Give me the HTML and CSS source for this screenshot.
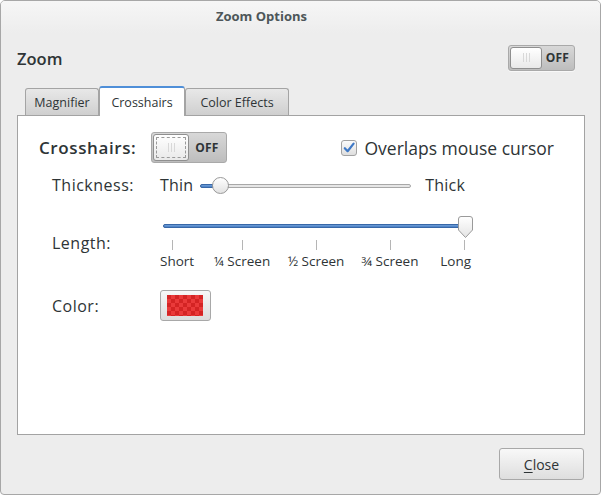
FILE: index.html
```html
<!DOCTYPE html>
<html>
<head>
<meta charset="utf-8">
<link rel="stylesheet" href="styles.css">
</head>
<body>
<div class="window">
  <div class="titlebar">Zoom Options</div>
  <div class="content">
    <div class="zoom-row">
      <span class="zoom-label">Zoom</span>
      <div class="switch big">
        <div class="thumb"><span class="grip"></span></div>
        <span class="off">OFF</span>
      </div>
    </div>
    <div class="tabs">
      <div class="tab">Magnifier</div>
      <div class="tab active">Crosshairs</div>
      <div class="tab">Color Effects</div>
    </div>
    <div class="panel">
      <div class="cross-row">
        <span class="cross-label">Crosshairs:</span>
        <div class="switch focus">
          <div class="thumb"><span class="grip"></span></div>
          <span class="off">OFF</span>
        </div>
        <label class="check">
          <span class="box">
            <svg width="14" height="14" viewBox="0 0 14 14"><path d="M2.8 7.2 L5.6 10.2 L11.6 2.6" fill="none" stroke="#3f79c6" stroke-width="2.2" stroke-linecap="round" stroke-linejoin="round"/></svg>
          </span>
          Overlaps mouse cursor
        </label>
      </div>
      <div class="grid">
        <span class="lbl thick-lbl">Thickness:</span>
        <div class="thick-row">
          <span class="end">Thin</span>
          <div class="slider small">
            <div class="track"><div class="fill"></div></div>
            <div class="knob"></div>
          </div>
          <span class="end">Thick</span>
        </div>
        <span class="lbl len-lbl">Length:</span>
        <div class="len">
          <div class="slider long">
            <div class="track"><div class="fill"></div></div>
            <svg class="pointer" width="17" height="23" viewBox="0 0 17 23"><defs><linearGradient id="pg" x1="0" y1="0" x2="0" y2="1"><stop offset="0" stop-color="#ffffff"/><stop offset="1" stop-color="#e4e4e4"/></linearGradient></defs><path d="M1.5 3 Q1.5 0.5 4 0.5 L13 0.5 Q15.5 0.5 15.5 3 L15.5 14 L8.5 21.5 L1.5 14 Z" fill="url(#pg)" stroke="#9a9a9a" stroke-width="1"/></svg>
          </div>
          <div class="ticks">
            <span class="tick t1"></span>
            <span class="tick t2"></span>
            <span class="tick t3"></span>
            <span class="tick t4"></span>
            <span class="tick t5"></span>
          </div>
          <div class="marks">
            <span class="mt l1">Short</span>
            <span class="mt l2">¼ Screen</span>
            <span class="mt l3">½ Screen</span>
            <span class="mt l4">¾ Screen</span>
            <span class="mt l5">Long</span>
          </div>
        </div>
        <span class="lbl color-lbl">Color:</span>
        <div class="colorcell">
          <div class="colorbtn"><div class="swatch"></div></div>
        </div>
      </div>
    </div>
    <div class="footer">
      <button class="close"><u>C</u>lose</button>
    </div>
  </div>
</div>
</body>
</html>
```
FILE: styles.css
```css
* { box-sizing: border-box; }
html, body { margin: 0; padding: 0; }
body {
  width: 601px;
  height: 495px;
  font-family: "Open Sans", "DejaVu Sans", sans-serif;
  color: #2e3436;
  background: #ffffff;
}
.window {
  width: 601px;
  height: 495px;
  border: 1px solid #a7a7a7;
  border-radius: 5px 5px 4px 4px;
  background: #ededed;
  overflow: hidden;
}
.titlebar {
  height: 32px;
  line-height: 31px;
  text-align: center;
  padding-right: 78px;
  font-size: 13px;
  font-weight: bold;
  color: #4d5659;
  background: linear-gradient(#f6f6f6, #ededed);
}
.content {
  padding: 0 16px 0 16px;
}
.zoom-row {
  height: 51px;
  display: flex;
  align-items: center;
  justify-content: space-between;
  padding-right: 9px;
}
.zoom-label {
  font-size: 16.5px;
  font-weight: 600;
  color: #2e3436;
  margin-top: -1px;
}
.switch {
  width: 67px;
  height: 26px;
  border: 1px solid #a9a9a9;
  border-radius: 3px;
  background: linear-gradient(#d8d8d8, #bdbdbd);
  display: flex;
  align-items: center;
  padding: 1px;
  box-shadow: 0 1px 0 rgba(255,255,255,0.6);
}
.switch.big { margin-top: -2px; }
.switch .thumb {
  width: 32px;
  height: 22px;
  border: 1px solid #8f8f8f;
  border-radius: 3px;
  background: linear-gradient(#ffffff, #e9e9e9);
  display: flex;
  align-items: center;
  justify-content: center;
}
.switch .grip {
  width: 7px;
  height: 9px;
  border-left: 1px solid #d8d8d8;
  border-right: 1px solid #d8d8d8;
  position: relative;
}
.switch .grip::after {
  content: "";
  position: absolute;
  left: 2px;
  top: 0;
  width: 1px;
  height: 9px;
  background: #d8d8d8;
}
.switch .off {
  flex: 1;
  text-align: center;
  font-size: 12px;
  font-weight: bold;
  color: #2e3436;
  letter-spacing: 0.2px;
}
.switch.focus {
  width: 76px;
  height: 31px;
  margin-top: -1px;
}
.switch.focus .thumb {
  width: 36px;
  height: 27px;
  position: relative;
}
.switch.focus .thumb::before {
  content: "";
  position: absolute;
  left: 2px; top: 2px; right: 2px; bottom: 2px;
  border: 1px dashed #9a9a9a;
  border-radius: 1px;
}
.tabs {
  display: flex;
  align-items: flex-end;
  height: 30px;
  padding-left: 8px;
  margin-top: 1px;
}
.tab {
  height: 27px;
  padding: 0 4px;
  font-size: 12.5px;
  line-height: 27px;
  color: #2e3436;
  border: 1px solid #a4a4a4;
  border-bottom: none;
  border-radius: 3px 3px 0 0;
  background: linear-gradient(#e8e8e8, #cfcfcf);
  text-align: center;
}
.tab:first-child { width: 74px; }
.tab.active {
  height: 30px;
  width: 86px;
  line-height: 30px;
  background: #ffffff;
  border-top: 2px solid #4f8fd8;
  margin-bottom: -1px;
  position: relative;
  z-index: 1;
}
.tab:last-child { width: 104px; }
.panel {
  height: 320px;
  width: 568px;
  border: 1px solid #a3a3a3;
  background: #ffffff;
  padding: 16px 30px 0 21px;
}
.cross-row {
  display: flex;
  align-items: center;
  height: 31px;
}
.cross-label {
  font-size: 17px;
  font-weight: 600;
  letter-spacing: 0.6px;
  width: 112px;
  color: #2e3436;
}
.check {
  margin-left: auto;
  display: flex;
  align-items: center;
  font-size: 17.5px;
  color: #2e3436;
}
.check .box {
  width: 16px;
  height: 16px;
  border: 1px solid #a2a2a2;
  border-radius: 3px;
  background: linear-gradient(#fbfbfb, #dedede);
  margin-right: 7px;
  display: flex;
  align-items: center;
  justify-content: center;
}
.grid {
  display: grid;
  grid-template-columns: 108px 1fr;
  padding-left: 13px;
  margin-top: 6px;
}
.lbl {
  font-size: 16px;
  letter-spacing: 0.5px;
  color: #2e3436;
}
.thick-lbl { height: 34px; line-height: 32px; }
.thick-row {
  display: flex;
  align-items: center;
  height: 34px;
  font-size: 16px;
}
.thick-row .end { line-height: 32px; margin-top: -2px; letter-spacing: 0.2px; }
.slider { position: relative; }
.slider .track {
  height: 4px;
  border: 1px solid #a8a8a8;
  border-radius: 2px;
  background: #e6e6e6;
  position: relative;
}
.slider .fill {
  position: absolute;
  left: -1px; top: -1px; bottom: -1px;
  border: 1px solid #3868a8;
  border-radius: 2px;
  background: linear-gradient(#6f9fd8, #4a7fc4);
}
.slider.small {
  width: 211px;
  margin: 0 14px 0 7px;
  height: 18px;
  display: flex;
  align-items: center;
  margin-top: -1px;
}
.slider.small .track { width: 100%; }
.slider.small .fill { width: 14px; }
.slider.small .knob {
  position: absolute;
  left: 12px;
  top: 0;
  width: 17px;
  height: 17px;
  border-radius: 50%;
  border: 1px solid #999;
  background: linear-gradient(#ffffff, #e2e2e2);
}
.len-lbl {
  padding-top: 30px;
  line-height: 20px;
}
.len {
  position: relative;
  height: 87px;
}
.slider.long {
  width: 309px;
  margin-left: 3px;
  height: 24px;
  padding-top: 8px;
  margin-top: 13px;
}
.slider.long .track { width: 300px; }
.slider.long .fill { width: 302px; }
.slider.long .pointer {
  position: absolute;
  left: 294px;
  top: 0;
}
.ticks {
  position: relative;
  height: 12px;
  margin-top: 0;
}
.tick {
  position: absolute;
  top: 0;
  width: 1px;
  height: 10px;
  background: #b5b5b5;
}
.t1 { left: 12px; }
.t2 { left: 82px; }
.t3 { left: 156px; }
.t4 { left: 230px; }
.t5 { left: 304px; }
.marks {
  position: relative;
  height: 24px;
}
.mt {
  position: absolute;
  top: 0;
  font-size: 13.5px;
  line-height: 18px;
  color: #2e3436;
  white-space: nowrap;
}
.l1 { left: 0; }
.l2 { left: 82px; transform: translateX(-50%); }
.l3 { left: 156px; transform: translateX(-50%); }
.l4 { left: 230px; transform: translateX(-50%); }
.l5 { left: 0; width: 311px; text-align: right; }
.color-lbl {
  line-height: 32px;
}
.colorbtn {
  width: 51px;
  height: 31px;
  border: 1px solid #a8a8a8;
  border-radius: 3px;
  background: linear-gradient(#f7f7f7, #dcdcdc);
  padding: 4px 7px 5px 6px;
}
.swatch {
  width: 36px;
  height: 21px;
  background-color: #d42424;
  background-image:
    linear-gradient(45deg, #ea3a3a 25%, transparent 25%, transparent 75%, #ea3a3a 75%),
    linear-gradient(45deg, #ea3a3a 25%, transparent 25%, transparent 75%, #ea3a3a 75%);
  background-size: 8px 8px;
  background-position: 0 0, 4px 4px;
}
.footer {
  display: flex;
  justify-content: flex-end;
  padding-top: 13px;
}
.close {
  width: 85px;
  height: 32px;
  border: 1px solid #a8a8a8;
  border-radius: 3px;
  background: linear-gradient(#f8f8f8, #dedede);
  font-family: "Open Sans", "DejaVu Sans", sans-serif;
  font-size: 14px;
  color: #2e3436;
}
.close u { text-decoration-thickness: 1px; text-underline-offset: 2px; }
```
